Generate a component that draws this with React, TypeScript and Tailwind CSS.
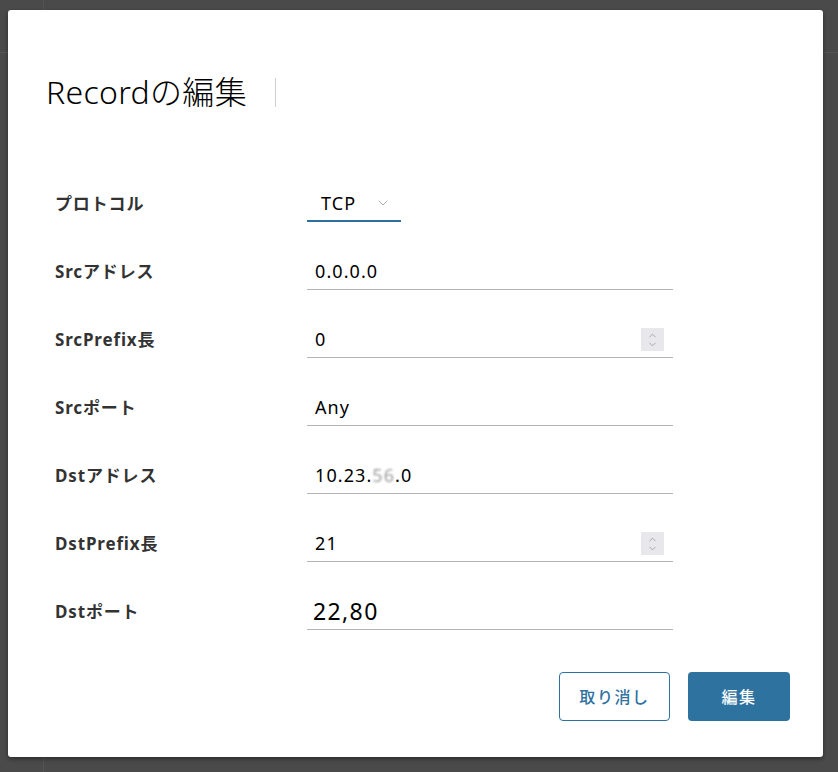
import { ChevronDown, ChevronUp } from "lucide-react";

const font = { fontFamily: '"Noto Sans", "Noto Sans CJK JP", sans-serif' };

function Spinner() {
  return (
    <div className="flex h-[23px] w-[23px] flex-col items-center justify-center bg-[#e8e8ec] text-[#8a8a8a]">
      <ChevronUp size={11} strokeWidth={1.5} className="-mb-[1px]" />
      <ChevronDown size={11} strokeWidth={1.5} className="-mt-[1px]" />
    </div>
  );
}

function Row({
  label,
  children,
}: {
  label: string;
  children: React.ReactNode;
}) {
  return (
    <div className="flex h-[68px] items-center">
      <div className="w-[252px] text-[17px] font-bold tracking-[0.05em] text-[#333]">{label}</div>
      {children}
    </div>
  );
}

function Field({
  value,
  spinner,
  big,
}: {
  value: React.ReactNode;
  spinner?: boolean;
  big?: boolean;
}) {
  return (
    <div className="flex h-[36px] w-[366px] items-center justify-between border-b border-[#b3b3b3] pl-[8px] pr-[9px]">
      <span
        className={
          big
            ? "-ml-[2px] text-[23px] tracking-[0.06em] text-black"
            : "text-[18px] tracking-[0.06em] text-black"
        }
      >
        {value}
      </span>
      {spinner && <Spinner />}
    </div>
  );
}

export default function App() {
  return (
    <div className="relative h-[772px] w-[838px] overflow-hidden bg-[#4a4a4a] pl-[8px] pt-[10px]" style={font}>
      {/* faint backdrop lines */}
      <div className="absolute left-[43px] top-0 h-full w-px bg-[#545454]" />
      <div className="absolute left-0 top-[52px] h-px w-full bg-[#545454]" />

      <div className="relative flex h-[747px] w-[815px] flex-col rounded-[3px] bg-white pl-[38px] pr-[33px] shadow-[0_2px_4px_rgba(0,0,0,0.4)]">
        {/* Header */}
        <header className="flex items-center pt-[62px]">
          <h1 className="text-[32px] font-light leading-[40px] tracking-[0.01em] text-black">Recordの編集</h1>
          <div className="ml-[28px] h-[29px] w-px bg-[#cfcfcf]" />
        </header>

        {/* Form */}
        <div className="mt-[58px] flex flex-col pl-[9px]">
          <Row label="プロトコル">
            <div className="flex h-[36px] w-[94px] items-center border-b-2 border-[#2f6f9f] pl-[14px]">
              <span className="text-[18px] tracking-[0.06em] text-black">TCP</span>
              <ChevronDown size={16} strokeWidth={1.3} className="ml-[19px] text-[#a0a0a0]" />
            </div>
          </Row>
          <Row label="Srcアドレス">
            <Field value="0.0.0.0" />
          </Row>
          <Row label="SrcPrefix長">
            <Field value="0" spinner />
          </Row>
          <Row label="Srcポート">
            <Field value="Any" />
          </Row>
          <Row label="Dstアドレス">
            <Field
              value={
                <>
                  10.23.
                  <span className="text-[#9c9c9c] blur-[1.2px]">56</span>
                  .0
                </>
              }
            />
          </Row>
          <Row label="DstPrefix長">
            <Field value="21" spinner />
          </Row>
          <Row label="Dstポート">
            <Field value="22,80" big />
          </Row>
        </div>

        {/* Footer buttons */}
        <div className="mt-[26px] flex justify-end gap-[18px]">
          <button
            type="button"
            className="h-[49px] w-[111px] rounded-[4px] border border-[#2f72a0] bg-white text-[16px] font-medium tracking-[0.1em] text-[#2f72a0]"
          >
            取り消し
          </button>
          <button
            type="button"
            className="h-[49px] w-[102px] rounded-[4px] bg-[#2e72a0] text-[16px] font-medium tracking-[0.1em] text-white"
          >
            編集
          </button>
        </div>
      </div>
    </div>
  );
}
